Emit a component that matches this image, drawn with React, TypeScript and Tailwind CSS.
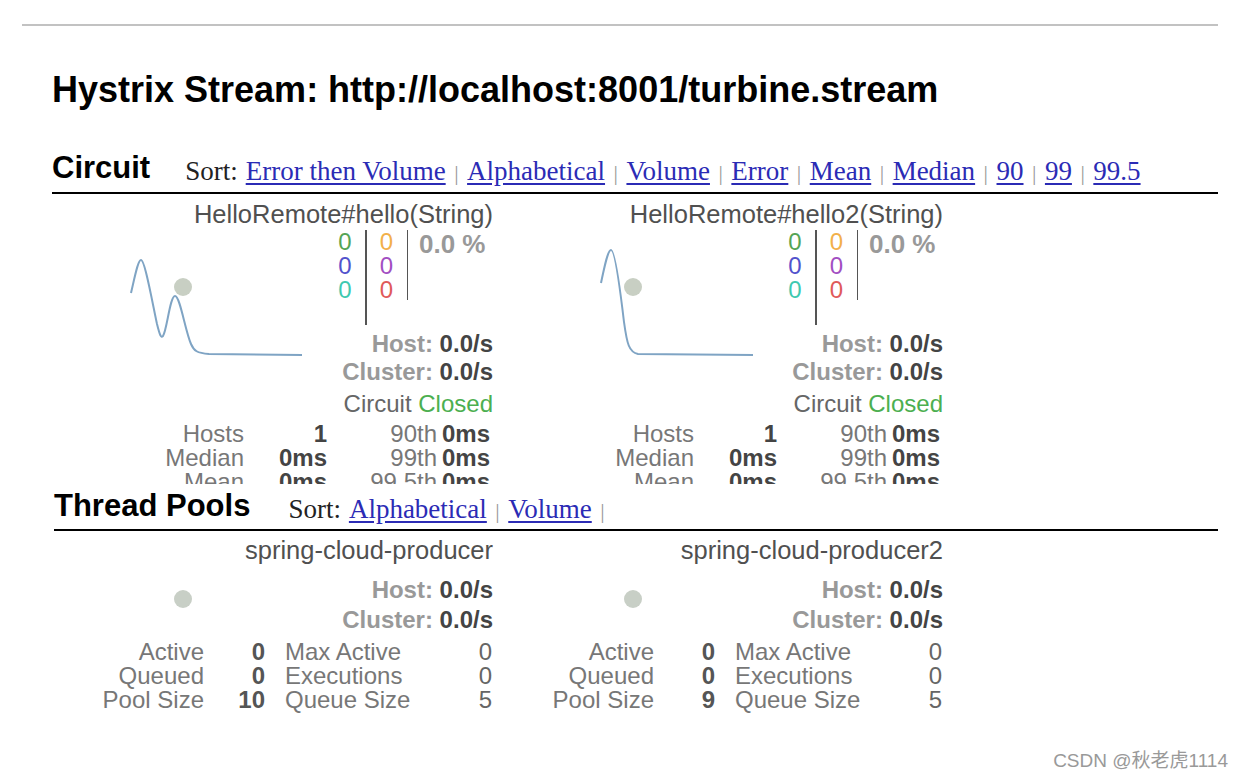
const sans = { fontFamily: '"Liberation Sans", Arial, sans-serif' }
const serif = { fontFamily: '"Liberation Serif", "Times New Roman", serif' }

function Sep() {
  return <span className="mx-[8.5px] text-[#999] text-[22px]">|</span>
}

function SortLinks({ links }: { links: string[] }) {
  return (
    <div className="text-[27px] leading-[30px] text-[#222]" style={serif}>
      <span className="mr-[8px]">Sort:</span>
      {links.map((l, i) => (
        <span key={l}>
          <a href="#" className="text-[#2b2bb5] underline underline-offset-[3px]">{l}</a>
          {(i < links.length - 1 || links.length === 2) && <Sep />}
        </span>
      ))}
    </div>
  )
}

function Spark({ d }: { d: string }) {
  return (
    <svg width="290" height="196" className="shrink-0">
      <path d={d} fill="none" stroke="#7fa4c4" strokeWidth="2" />
      <circle cx="140" cy="61" r="9" fill="#c8cfc3" />
    </svg>
  )
}

function CircuitCard({ name, path }: { name: string; path: string }) {
  return (
    <div className="w-[450px] h-[290px] overflow-hidden pt-[8px]" style={sans}>
      <div className="text-right text-[25.5px] leading-[24px] text-[#505050]">{name}</div>
      <div className="flex">
        <Spark d={path} />
        <div className="w-[160px] flex flex-col items-end pt-[4px]">
          <div className="h-[100px] flex text-[24px] leading-[24px]">
            <div className="w-[20px] text-center">
              <div className="text-[#55a455]">0</div>
              <div className="text-[#5252cc]">0</div>
              <div className="text-[#3fc9b0]">0</div>
            </div>
            <div className="ml-[10px] w-[1.5px] h-[95px] bg-[#555]" />
            <div className="w-[40px] text-center">
              <div className="text-[#f2b04a]">0</div>
              <div className="text-[#a24fc2]">0</div>
              <div className="text-[#e05a5a]">0</div>
            </div>
            <div className="w-[1.5px] h-[70px] bg-[#555]" />
            <div className="w-[85px] pl-[11px] text-[26px] leading-[28px] font-bold text-[#999]">0.0 %</div>
          </div>
          <div className="text-[24px] leading-[28px] font-bold text-[#444]">
            <span className="text-[#999]">Host:</span> 0.0/s
          </div>
          <div className="text-[24px] leading-[28px] font-bold text-[#444]">
            <span className="text-[#999]">Cluster:</span> 0.0/s
          </div>
          <div className="text-[24px] leading-[36px] text-[#666]">
            Circuit <span className="text-[#4caf50]">Closed</span>
          </div>
        </div>
      </div>
      <div className="grid grid-cols-[201px_83px_110px_53px] text-[24px] leading-[24px]">
        <div className="text-right text-[#777]">Hosts</div>
        <div className="text-right font-bold text-[#444]">1</div>
        <div className="text-right text-[#777]">90th</div>
        <div className="text-right font-bold text-[#444]">0ms</div>
        <div className="text-right text-[#777]">Median</div>
        <div className="text-right font-bold text-[#444]">0ms</div>
        <div className="text-right text-[#777]">99th</div>
        <div className="text-right font-bold text-[#444]">0ms</div>
        <div className="text-right text-[#777]">Mean</div>
        <div className="text-right font-bold text-[#444]">0ms</div>
        <div className="text-right text-[#777]">99.5th</div>
        <div className="text-right font-bold text-[#444]">0ms</div>
      </div>
    </div>
  )
}

function PoolCard({ name, size }: { name: string; size: number }) {
  const rows: [string, number, string, number][] = [
    ['Active', 0, 'Max Active', 0],
    ['Queued', 0, 'Executions', 0],
    ['Pool Size', size, 'Queue Size', 5],
  ]
  return (
    <div className="w-[450px] pt-[6px]" style={sans}>
      <div className="text-right text-[25.5px] leading-[26px] text-[#505050]">{name}</div>
      <div className="flex items-center pt-[12px]">
        <div className="w-[290px] flex items-center">
          <div className="ml-[131px] mb-[12px] w-[18px] h-[18px] rounded-full bg-[#c8cfc6]" />
        </div>
        <div className="w-[160px] flex flex-col items-end">
          <div className="text-[24px] leading-[30px] font-bold text-[#444]">
            <span className="text-[#999]">Host:</span> 0.0/s
          </div>
          <div className="text-[24px] leading-[30px] font-bold text-[#444]">
            <span className="text-[#999]">Cluster:</span> 0.0/s
          </div>
        </div>
      </div>
      <div className="grid grid-cols-[161px_61px_175px_52px] text-[24px] leading-[24px] mt-[5px]">
        {rows.map(([a, b, c, d]) => (
          <div key={a} className="contents">
            <div className="text-right text-[#777]">{a}</div>
            <div className="text-right font-bold text-[#555]">{b}</div>
            <div className="pl-[20px] text-[#777]">{c}</div>
            <div className="text-right text-[#666]">{d}</div>
          </div>
        ))}
      </div>
    </div>
  )
}

export default function App() {
  return (
    <div className="relative w-[1244px] h-[780px] bg-white overflow-hidden pt-[24px]" style={sans}>
      <div className="ml-[22px] mr-[26px] border-t-2 border-[#c2c2c2]" />
      <h1 className="ml-[52px] mt-[44px] text-[36px] leading-[40px] font-bold text-black">
        Hystrix Stream: http://localhost:8001/turbine.stream
      </h1>

      <div className="ml-[52px] mr-[26px] mt-[38px] pb-[4px] flex items-end border-b-2 border-black">
        <h2 className="text-[31px] leading-[40px] font-bold text-black">Circuit</h2>
        <div className="ml-[35px]">
          <SortLinks links={['Error then Volume', 'Alphabetical', 'Volume', 'Error', 'Mean', 'Median', '90', '99', '99.5']} />
        </div>
      </div>
      <div className="ml-[43px] flex">
        <CircuitCard
          name="HelloRemote#hello(String)"
          path="M88,67 C92,50 95,34 98,34 C102,34 110,80 114,98 C117,110 118,112 120,110 C124,104 127,70 132,70 C137,70 142,104 148,118 C151,125 154,127 166,128 L259,129"
        />
        <CircuitCard
          name="HelloRemote#hello2(String)"
          path="M108,57 C112,38 115,24 118,24 C122,24 127,62 131,96 C134,118 136,126 145,128 L260,129"
        />
      </div>

      <div className="ml-[54px] mr-[26px] mt-[2px] pb-[3px] flex items-end border-b-2 border-black">
        <h2 className="text-[31px] leading-[40px] font-bold text-black">Thread Pools</h2>
        <div className="ml-[38px]">
          <SortLinks links={['Alphabetical', 'Volume']} />
        </div>
      </div>
      <div className="ml-[43px] flex">
        <PoolCard name="spring-cloud-producer" size={10} />
        <PoolCard name="spring-cloud-producer2" size={9} />
      </div>

      <div
        className="absolute right-[16px] bottom-[8px] text-[19px] leading-[22px] text-[#999]"
        style={{ fontFamily: '"Liberation Sans", "Noto Sans CJK SC", sans-serif' }}
      >
        CSDN @秋老虎1114
      </div>
    </div>
  )
}
